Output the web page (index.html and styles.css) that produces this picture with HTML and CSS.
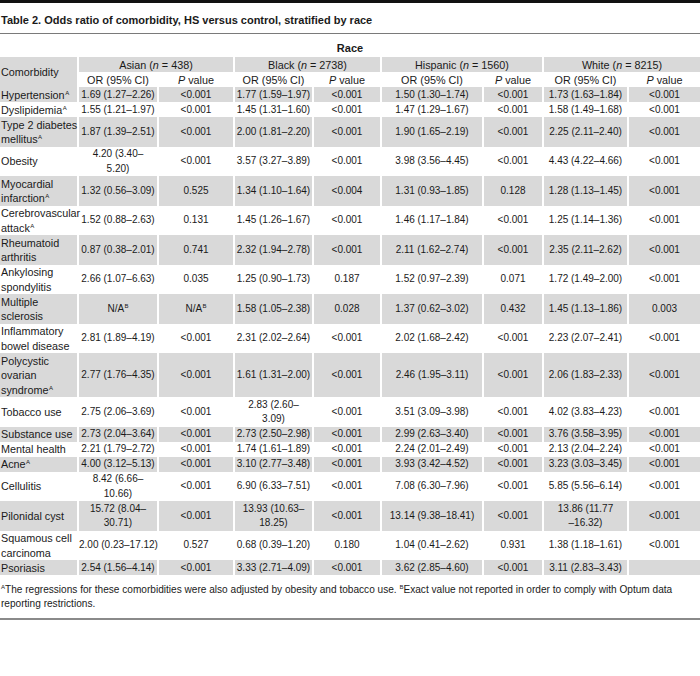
FILE: index.html
```html
<!DOCTYPE html>
<html lang="en">
<head>
<meta charset="utf-8">
<title>Table 2</title>
<link rel="stylesheet" href="styles.css">
</head>
<body>
<div class="topbar"></div>
<h1 class="title">Table 2. Odds ratio of comorbidity, HS versus control, stratified by race</h1>
<table class="data">
  <colgroup>
    <col class="c-name">
    <col class="c-aor"><col class="c-ap">
    <col class="c-bor"><col class="c-bp">
    <col class="c-hor"><col class="c-hp">
    <col class="c-wor"><col class="c-wp">
  </colgroup>
  <thead>
    <tr><th colspan="9" class="race">Race</th></tr>
    <tr>
      <th rowspan="2" class="name shade">Comorbidity</th>
      <th colspan="2" class="grp shade">Asian (<i>n</i> = 438)</th>
      <th colspan="2" class="grp shade">Black (<i>n</i> = 2738)</th>
      <th colspan="2" class="grp shade">Hispanic (<i>n</i> = 1560)</th>
      <th colspan="2" class="grp shade">White (<i>n</i> = 8215)</th>
    </tr>
    <tr class="sub">
      <th>OR (95% CI)</th><th><i>P</i> value</th>
      <th>OR (95% CI)</th><th><i>P</i> value</th>
      <th>OR (95% CI)</th><th><i>P</i> value</th>
      <th>OR (95% CI)</th><th><i>P</i> value</th>
    </tr>
  </thead>
  <tbody>
    <tr class="shade"><td>Hypertension<sup>A</sup></td><td>1.69 (1.27–2.26)</td><td>&lt;0.001</td><td>1.77 (1.59–1.97)</td><td>&lt;0.001</td><td>1.50 (1.30–1.74)</td><td>&lt;0.001</td><td>1.73 (1.63–1.84)</td><td>&lt;0.001</td></tr>
    <tr><td>Dyslipidemia<sup>A</sup></td><td>1.55 (1.21–1.97)</td><td>&lt;0.001</td><td>1.45 (1.31–1.60)</td><td>&lt;0.001</td><td>1.47 (1.29–1.67)</td><td>&lt;0.001</td><td>1.58 (1.49–1.68)</td><td>&lt;0.001</td></tr>
    <tr class="shade"><td>Type 2 diabetes<br>mellitus<sup>A</sup></td><td>1.87 (1.39–2.51)</td><td>&lt;0.001</td><td>2.00 (1.81–2.20)</td><td>&lt;0.001</td><td>1.90 (1.65–2.19)</td><td>&lt;0.001</td><td>2.25 (2.11–2.40)</td><td>&lt;0.001</td></tr>
    <tr><td>Obesity</td><td>4.20 (3.40–<br>5.20)</td><td>&lt;0.001</td><td>3.57 (3.27–3.89)</td><td>&lt;0.001</td><td>3.98 (3.56–4.45)</td><td>&lt;0.001</td><td>4.43 (4.22–4.66)</td><td>&lt;0.001</td></tr>
    <tr class="shade"><td>Myocardial<br>infarction<sup>A</sup></td><td>1.32 (0.56–3.09)</td><td>0.525</td><td>1.34 (1.10–1.64)</td><td>&lt;0.004</td><td>1.31 (0.93–1.85)</td><td>0.128</td><td>1.28 (1.13–1.45)</td><td>&lt;0.001</td></tr>
    <tr><td>Cerebrovascular<br>attack<sup>A</sup></td><td>1.52 (0.88–2.63)</td><td>0.131</td><td>1.45 (1.26–1.67)</td><td>&lt;0.001</td><td>1.46 (1.17–1.84)</td><td>&lt;0.001</td><td>1.25 (1.14–1.36)</td><td>&lt;0.001</td></tr>
    <tr class="shade"><td>Rheumatoid<br>arthritis</td><td>0.87 (0.38–2.01)</td><td>0.741</td><td>2.32 (1.94–2.78)</td><td>&lt;0.001</td><td>2.11 (1.62–2.74)</td><td>&lt;0.001</td><td>2.35 (2.11–2.62)</td><td>&lt;0.001</td></tr>
    <tr><td>Ankylosing<br>spondylitis</td><td>2.66 (1.07–6.63)</td><td>0.035</td><td>1.25 (0.90–1.73)</td><td>0.187</td><td>1.52 (0.97–2.39)</td><td>0.071</td><td>1.72 (1.49–2.00)</td><td>&lt;0.001</td></tr>
    <tr class="shade"><td>Multiple<br>sclerosis</td><td>N/A<sup>B</sup></td><td>N/A<sup>B</sup></td><td>1.58 (1.05–2.38)</td><td>0.028</td><td>1.37 (0.62–3.02)</td><td>0.432</td><td>1.45 (1.13–1.86)</td><td>0.003</td></tr>
    <tr><td>Inflammatory<br>bowel disease</td><td>2.81 (1.89–4.19)</td><td>&lt;0.001</td><td>2.31 (2.02–2.64)</td><td>&lt;0.001</td><td>2.02 (1.68–2.42)</td><td>&lt;0.001</td><td>2.23 (2.07–2.41)</td><td>&lt;0.001</td></tr>
    <tr class="shade"><td>Polycystic<br>ovarian<br>syndrome<sup>A</sup></td><td>2.77 (1.76–4.35)</td><td>&lt;0.001</td><td>1.61 (1.31–2.00)</td><td>&lt;0.001</td><td>2.46 (1.95–3.11)</td><td>&lt;0.001</td><td>2.06 (1.83–2.33)</td><td>&lt;0.001</td></tr>
    <tr><td>Tobacco use</td><td>2.75 (2.06–3.69)</td><td>&lt;0.001</td><td>2.83 (2.60–<br>3.09)</td><td>&lt;0.001</td><td>3.51 (3.09–3.98)</td><td>&lt;0.001</td><td>4.02 (3.83–4.23)</td><td>&lt;0.001</td></tr>
    <tr class="shade"><td>Substance use</td><td>2.73 (2.04–3.64)</td><td>&lt;0.001</td><td>2.73 (2.50–2.98)</td><td>&lt;0.001</td><td>2.99 (2.63–3.40)</td><td>&lt;0.001</td><td>3.76 (3.58–3.95)</td><td>&lt;0.001</td></tr>
    <tr><td>Mental health</td><td>2.21 (1.79–2.72)</td><td>&lt;0.001</td><td>1.74 (1.61–1.89)</td><td>&lt;0.001</td><td>2.24 (2.01–2.49)</td><td>&lt;0.001</td><td>2.13 (2.04–2.24)</td><td>&lt;0.001</td></tr>
    <tr class="shade"><td>Acne<sup>A</sup></td><td>4.00 (3.12–5.13)</td><td>&lt;0.001</td><td>3.10 (2.77–3.48)</td><td>&lt;0.001</td><td>3.93 (3.42–4.52)</td><td>&lt;0.001</td><td>3.23 (3.03–3.45)</td><td>&lt;0.001</td></tr>
    <tr><td>Cellulitis</td><td>8.42 (6.66–<br>10.66)</td><td>&lt;0.001</td><td>6.90 (6.33–7.51)</td><td>&lt;0.001</td><td>7.08 (6.30–7.96)</td><td>&lt;0.001</td><td>5.85 (5.56–6.14)</td><td>&lt;0.001</td></tr>
    <tr class="shade"><td>Pilonidal cyst</td><td>15.72 (8.04–<br>30.71)</td><td>&lt;0.001</td><td>13.93 (10.63–<br>18.25)</td><td>&lt;0.001</td><td>13.14 (9.38–18.41)</td><td>&lt;0.001</td><td>13.86 (11.77<br>–16.32)</td><td>&lt;0.001</td></tr>
    <tr><td>Squamous cell<br>carcinoma</td><td>2.00 (0.23–17.12)</td><td>0.527</td><td>0.68 (0.39–1.20)</td><td>0.180</td><td>1.04 (0.41–2.62)</td><td>0.931</td><td>1.38 (1.18–1.61)</td><td>&lt;0.001</td></tr>
    <tr class="shade"><td>Psoriasis</td><td>2.54 (1.56–4.14)</td><td>&lt;0.001</td><td>3.33 (2.71–4.09)</td><td>&lt;0.001</td><td>3.62 (2.85–4.60)</td><td>&lt;0.001</td><td>3.11 (2.83–3.43)</td><td></td></tr>
  </tbody>
</table>
<p class="notes"><sup>A</sup>The regressions for these comorbidities were also adjusted by obesity and tobacco use. <sup>B</sup>Exact value not reported in order to comply with Optum data<br>reporting restrictions.</p>
</body>
</html>
```

FILE: styles.css
```css
html, body {
  margin: 0;
  padding: 0;
  background: #ffffff;
}

body {
  width: 700px;
  font-family: "Liberation Sans", Arial, sans-serif;
  color: #1a1a1a;
}

.topbar {
  height: 3px;
  background: #111111;
}

.title {
  margin: 0;
  padding: 10px 1px 6px;
  font-size: 11px;
  line-height: 14px;
  font-weight: bold;
  border-bottom: 1px solid #7a7a7a;
}

.data {
  width: 700px;
  table-layout: fixed;
  border-collapse: separate;
  border-spacing: 0;
  font-size: 10.8px;
  line-height: 14.5px;
}

.c-name { width: 77px; }
.c-aor { width: 80px; }
.c-ap { width: 76px; }
.c-bor { width: 79px; }
.c-bp { width: 68px; }
.c-hor { width: 102px; }
.c-hp { width: 60px; }
.c-wor { width: 85px; }
.c-wp { width: 73px; }

.data th,
.data td {
  padding: 0.5px 0 0;
  font-weight: normal;
  text-align: center;
  vertical-align: middle;
  white-space: nowrap;
  border-left: 2px solid #ffffff;
}

.data td {
  font-size: 10px;
}

.data th:first-child,
.data td:first-child {
  border-left: 0;
  text-align: left;
  padding-left: 1px;
  font-size: 10.8px;
}

.data .sub th:first-child {
  border-left: 2px solid #ffffff;
  text-align: center;
  padding-left: 0;
}

.data th.race {
  font-weight: bold;
  text-align: center;
  padding: 7px 0 1.5px;
  font-size: 11px;
  line-height: 14.5px;
}

.shade td,
th.shade {
  background: #d9d9d9;
}

sup {
  font-size: 6px;
  line-height: 0;
  vertical-align: 4px;
  margin-left: 0.5px;
}

.notes {
  margin: 0;
  padding: 8px 1px 7px;
  font-size: 10.1px;
  line-height: 14px;
  border-bottom: 2px solid #8a8a8a;
}

.notes sup {
  margin-left: 0;
}
```
